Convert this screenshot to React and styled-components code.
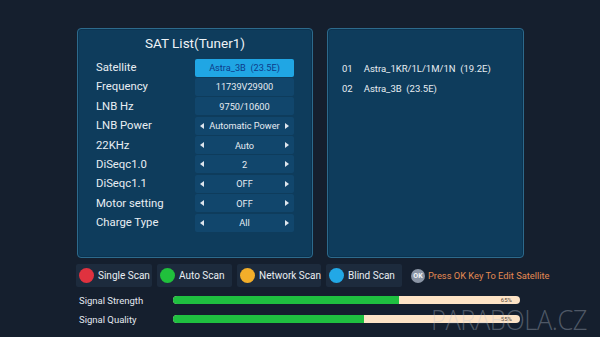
import React from "react"
import styled, { createGlobalStyle } from "styled-components"

const Global = createGlobalStyle`
  html, body {
    margin: 0;
    padding: 0;
    background: #151f2e;
  }
  body {
    font-family: Roboto, "Liberation Sans", sans-serif;
  }
`

const Screen = styled.div`
  position: relative;
  width: 600px;
  height: 337px;
  overflow: hidden;
  background: #151f2e;
  padding: 28px 0 0 76px;
  box-sizing: border-box;
  display: flex;
  flex-direction: column;
`

const Panels = styled.div`
  display: flex;
  gap: 14px;
  height: 230px;
`

const Panel = styled.div`
  width: ${p => p.$w}px;
  margin-left: ${p => p.$ml || 0}px;
  box-sizing: border-box;
  background: #0e3c5c;
  border: 1.5px solid #2d6a8c;
  border-radius: 4px;
  box-shadow: inset 0 0 0 1px #0b3350;
`

const Title = styled.div`
  color: #eef3f7;
  font-size: 13.5px;
  text-align: center;
  margin-top: 4px;
  height: 20px;
  line-height: 20px;
`

const Rows = styled.div`
  display: flex;
  flex-direction: column;
  gap: 1.4px;
  margin-top: 5.5px;
  padding: 0 18px 0 18px;
`

const Row = styled.div`
  display: flex;
  align-items: center;
  justify-content: space-between;
  height: 18px;
`

const Label = styled.div`
  color: #e9eef3;
  font-size: 11.3px;
`

const Value = styled.div`
  width: 99px;
  height: 18px;
  box-sizing: border-box;
  display: flex;
  align-items: center;
  justify-content: ${p => (p.$arrows ? "space-between" : "center")};
  padding: 0 5px;
  font-size: 9.2px;
  border-radius: 2px;
  background: ${p => (p.$active ? "#20a6e4" : "#11466c")};
  color: ${p => (p.$active ? "#0d3b8a" : "#e6ecf2")};
`

const Arrow = styled.span`
  width: 0;
  height: 0;
  border-top: 3px solid transparent;
  border-bottom: 3px solid transparent;
  ${p => (p.$dir === "left" ? "border-right: 4px solid #dfe6ee;" : "border-left: 4px solid #dfe6ee;")}
`

const List = styled.div`
  display: flex;
  flex-direction: column;
  gap: 9px;
  padding: 34px 0 0 14px;
`

const ListItem = styled.div`
  display: flex;
  gap: 11px;
  color: #e8edf2;
  font-size: 9.5px;
  white-space: pre;
`

const Buttons = styled.div`
  display: flex;
  align-items: center;
  gap: 5px;
  margin-top: 6px;
  height: 23px;
`

const ScanButton = styled.div`
  width: ${p => p.$w}px;
  height: 23px;
  box-sizing: border-box;
  display: flex;
  align-items: center;
  gap: 4px;
  padding-left: 3px;
  background: #1d2b3d;
  border-radius: 2px;
  color: #e9eef3;
  font-size: 10px;
`

const Dot = styled.span`
  width: 15px;
  height: 15px;
  border-radius: 50%;
  background: ${p => p.$c};
  flex-shrink: 0;
`

const Hint = styled.div`
  display: flex;
  align-items: center;
  gap: 3px;
  margin-left: 4px;
  color: #e48a52;
  font-size: 9.3px;
`

const OkBadge = styled.span`
  width: 14px;
  height: 14px;
  border-radius: 50%;
  background: #8b95a5;
  color: #f4f6f8;
  font-size: 7px;
  font-weight: bold;
  display: flex;
  align-items: center;
  justify-content: center;
`

const Signals = styled.div`
  display: flex;
  flex-direction: column;
  gap: 11px;
  margin-top: 9px;
  padding-left: 3px;
`

const SignalRow = styled.div`
  display: flex;
  align-items: center;
  height: 8px;
`

const SignalLabel = styled.div`
  width: 94px;
  color: #e2e8ef;
  font-size: 9.5px;
`

const Track = styled.div`
  position: relative;
  width: 347px;
  height: 8px;
  border-radius: 4px;
  background: #fde3c6;
  overflow: hidden;
`

const Fill = styled.div`
  height: 100%;
  background: #1fc040;
`

const Percent = styled.span`
  position: absolute;
  right: 8px;
  top: 0;
  line-height: 8px;
  font-size: 6px;
  color: #5a4a3a;
`

const Watermark = styled.div`
  position: absolute;
  left: 431px;
  top: 303px;
  font-family: "Open Sans", "Liberation Sans", sans-serif;
  font-weight: 300;
  font-size: 28px;
  line-height: 32px;
  letter-spacing: -0.5px;
  transform: scaleX(0.91);
  transform-origin: left top;
  white-space: nowrap;
  color: rgba(190, 198, 210, 0.35);
`

const rows = [
  ["Satellite", "Astra_3B  (23.5E)", "active"],
  ["Frequency", "11739V29900"],
  ["LNB Hz", "9750/10600"],
  ["LNB Power", "Automatic Power", "arrows"],
  ["22KHz", "Auto", "arrows"],
  ["DiSeqc1.0", "2", "arrows"],
  ["DiSeqc1.1", "OFF", "arrows"],
  ["Motor setting", "OFF", "arrows"],
  ["Charge Type", "All", "arrows"],
]

const scans = [
  ["Single Scan", "#e0323f", 76],
  ["Auto Scan", "#20c03c", 75],
  ["Network Scan", "#f2ae2a", 84],
  ["Blind Scan", "#22a8e6", 76],
]

const signals = [
  ["Signal Strength", 65],
  ["Signal Quality", 55],
]

export default function App() {
  return (
    <>
      <Global />
      <Screen>
        <Panels>
          <Panel $w={236} $ml={1}>
            <Title>SAT List(Tuner1)</Title>
            <Rows>
              {rows.map(([label, value, kind]) => (
                <Row key={label}>
                  <Label>{label}</Label>
                  <Value $active={kind === "active"} $arrows={kind === "arrows"}>
                    {kind === "arrows" && <Arrow $dir="left" />}
                    <span style={{ whiteSpace: "pre" }}>{value}</span>
                    {kind === "arrows" && <Arrow $dir="right" />}
                  </Value>
                </Row>
              ))}
            </Rows>
          </Panel>
          <Panel $w={197}>
            <List>
              <ListItem><span>01</span><span>Astra_1KR/1L/1M/1N  (19.2E)</span></ListItem>
              <ListItem><span>02</span><span>Astra_3B  (23.5E)</span></ListItem>
            </List>
          </Panel>
        </Panels>
        <Buttons>
          {scans.map(([name, color, w]) => (
            <ScanButton key={name} $w={w}>
              <Dot $c={color} />
              {name}
            </ScanButton>
          ))}
          <Hint>
            <OkBadge>OK</OkBadge>
            Press OK Key To Edit Satellite
          </Hint>
        </Buttons>
        <Signals>
          {signals.map(([name, pct]) => (
            <SignalRow key={name}>
              <SignalLabel>{name}</SignalLabel>
              <Track>
                <Fill style={{ width: `${pct}%` }} />
                <Percent>{pct}%</Percent>
              </Track>
            </SignalRow>
          ))}
        </Signals>
        <Watermark>PARABOLA.CZ</Watermark>
      </Screen>
    </>
  )
}
